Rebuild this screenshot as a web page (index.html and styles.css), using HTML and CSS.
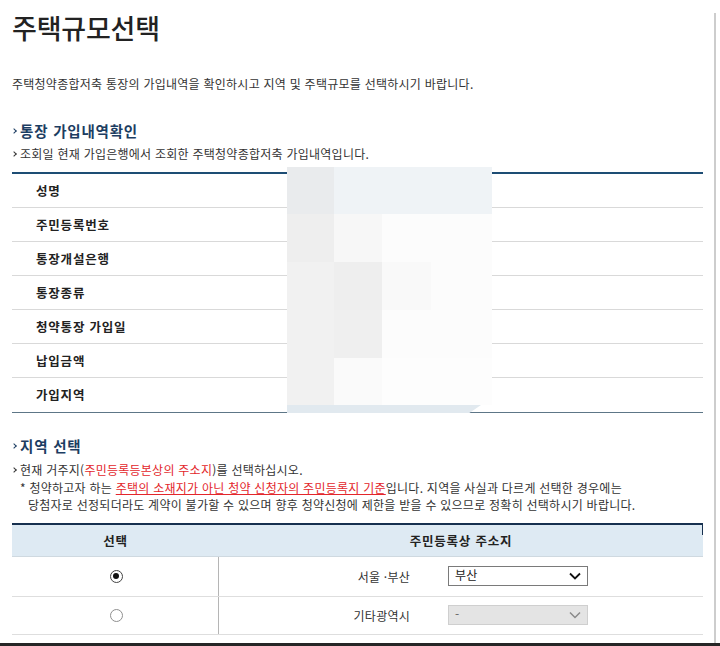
FILE: index.html
```html
<!DOCTYPE html>
<html lang="ko">
<head>
<meta charset="utf-8">
<title>주택규모선택</title>
<link rel="stylesheet" href="styles.css">
</head>
<body>
<div class="page">
  <h1 class="title">주택규모선택</h1>
  <p class="desc">주택청약종합저축 통장의 가입내역을 확인하시고 지역 및 주택규모를 선택하시기 바랍니다.</p>

  <h2 class="sec-head"><span class="mark"></span>통장 가입내역확인</h2>
  <p class="note"><span class="mark small"></span>조회일 현재 가입은행에서 조회한 주택청약종합저축 가입내역입니다.</p>

  <div class="info-wrap">
    <div class="info-table">
      <div class="info-row">성명</div>
      <div class="info-row">주민등록번호</div>
      <div class="info-row">통장개설은행</div>
      <div class="info-row">통장종류</div>
      <div class="info-row">청약통장 가입일</div>
      <div class="info-row">납입금액</div>
      <div class="info-row">가입지역</div>
    </div>
    <div class="blur">
      <div class="bc c-a"></div><div class="bc c-b"></div><div class="bc c-b"></div><div class="bc c-b"></div>
      <div class="bc c-d"></div><div class="bc c-f"></div><div class="bc c-g"></div><div class="bc c-g"></div>
      <div class="bc c-e"></div><div class="bc c-d"></div><div class="bc c-h"></div><div class="bc c-g"></div>
      <div class="bc c-e"></div><div class="bc c-d2"></div><div class="bc c-g"></div><div class="bc c-g"></div>
      <div class="bc c-e"></div><div class="bc c-i"></div><div class="bc c-j"></div><div class="bc c-j"></div>
    </div>
    <div class="blur-strip"></div>
  </div>

  <h2 class="sec-head sec2"><span class="mark"></span>지역 선택</h2>
  <p class="note note2"><span class="mark small"></span>현재 거주지(<span class="red">주민등록등본상의 주소지</span>)를 선택하십시오.</p>
  <p class="star">* 청약하고자 하는 <span class="red uline">주택의 소재지가 아닌 청약 신청자의 주민등록지 기준</span>입니다. 지역을 사실과 다르게 선택한 경우에는<br><span class="indent">당첨자로 선정되더라도 계약이 불가할 수 있으며 향후 청약신청에 제한을 받을 수 있으므로 정확히 선택하시기 바랍니다.</span></p>

  <div class="region-table">
    <div class="rt-head">
      <div class="rt-c1">선택</div>
      <div class="rt-c2">주민등록상 주소지</div>
    </div>
    <div class="rt-row r1">
      <div class="rt-c1"><span class="radio checked"></span></div>
      <div class="rt-c2">
        <div class="pick">
          <span class="pick-label">서울 ·부산</span>
          <div class="sel">
            <span class="sel-val">부산</span>
            <svg class="chev" width="12" height="8" viewBox="0 0 12 8"><path d="M1 1.5 L6 6.5 L11 1.5" fill="none" stroke="#111" stroke-width="1.8"/></svg>
          </div>
        </div>
      </div>
    </div>
    <div class="rt-row r2">
      <div class="rt-c1"><span class="radio"></span></div>
      <div class="rt-c2">
        <div class="pick">
          <span class="pick-label">기타광역시</span>
          <div class="sel disabled">
            <span class="sel-val">-</span>
            <svg class="chev" width="12" height="8" viewBox="0 0 12 8"><path d="M1 1.5 L6 6.5 L11 1.5" fill="none" stroke="#8a8a8a" stroke-width="1.5"/></svg>
          </div>
        </div>
      </div>
    </div>
  </div>
</div>
<div class="screen-bottom"></div>
</body>
</html>
```
FILE: styles.css
```css
* { box-sizing: border-box; }
html, body { margin: 0; padding: 0; background: #fff; }
body {
  font-family: "Noto Sans CJK KR", "Noto Sans", sans-serif;
  color: #333;
  overflow: hidden;
  letter-spacing: 0.25px;
}
.page {
  width: 716px;
  min-height: 646px;
  border-right: 2px solid #cdcdcd;
  padding: 0 11px 0 12px;
}
.title {
  margin: 13px 0 0;
  font-size: 27px;
  line-height: 30px;
  font-weight: 500;
  color: #222;
  letter-spacing: -0.2px;
}
.desc {
  margin: 33px 0 0;
  font-size: 12px;
  line-height: 16px;
  color: #333;
}
.sec-head {
  margin: 29px 0 0;
  font-size: 14.5px;
  line-height: 20px;
  font-weight: 700;
  color: #1c3d62;
  display: flex;
  align-items: center;
  letter-spacing: 0.8px;
}
.mark {
  display: inline-block;
  width: 4px;
  height: 4px;
  border-right: 1.5px solid #1c3d62;
  border-bottom: 1.5px solid #1c3d62;
  transform: rotate(-45deg);
  margin: 0 4px 0 0;
  flex: none;
}
.mark.small {
  border-color: #333;
}
.note {
  margin: 5px 0 0;
  font-size: 12px;
  line-height: 16px;
  color: #333;
  display: flex;
  align-items: center;
}
.info-wrap {
  position: relative;
  margin-top: 10px;
}
.info-table {
  border-top: 2px solid #1d4d74;
  border-bottom: 1.5px solid #5d7687;
}
.info-row {
  height: 34px;
  border-bottom: 1px solid #d9d9d9;
  padding-left: 24px;
  font-size: 12.5px;
  font-weight: 700;
  color: #222;
  letter-spacing: 0.8px;
  display: flex;
  align-items: center;
}
.info-row:last-child { border-bottom: none; height: 33.5px; }
.blur {
  position: absolute;
  left: 275px;
  top: -5px;
  width: 205px;
  height: 238px;
  display: grid;
  grid-template-columns: 47px 48px 49px 61px;
  grid-template-rows: 47px 48px 48px 48px 47px;
}
.c-a { background: #e9ebed; }
.c-b { background: #eff3f6; }
.c-d { background: #eeeeee; }
.c-d2 { background: #efefef; }
.c-e { background: #f1f1f1; }
.c-f { background: #f7f7f7; }
.c-g { background: #fcfcfc; }
.c-h { background: #f9f9f9; }
.c-i { background: #fafafa; }
.c-j { background: #fdfdfd; }
.blur-strip {
  position: absolute;
  left: 275px;
  top: 233px;
  width: 194px;
  height: 8px;
  background: #e1e9ef;
  clip-path: polygon(0 0, 100% 0, 94% 100%, 0 100%);
}
.sec2 { margin-top: 23px; }
.note2 { margin-top: 6px; }
.red { color: #e3262b; }
.uline { text-decoration: underline; text-underline-offset: 1px; }
.star {
  margin: 1px 0 0 8px;
  font-size: 12px;
  line-height: 17.5px;
  color: #333;
}
.indent { padding-left: 8px; }
.region-table {
  margin-top: 9px;
  border-top: 2px solid #17304f;
  position: relative;
}
.region-table::after {
  content: "";
  position: absolute;
  right: 0;
  top: -2px;
  width: 1px;
  height: 12px;
  background: #17304f;
}
.rt-head {
  display: flex;
  height: 32px;
  background: #deeaf3;
  font-size: 12.5px;
  font-weight: 700;
  color: #222;
  letter-spacing: 0.8px;
  border-bottom: 1px solid #cfd9e0;
}
.rt-head > div {
  display: flex;
  align-items: center;
  justify-content: center;
}
.rt-c1 { width: 207px; flex: none; }
.rt-c2 { flex: 1; }
.rt-row {
  display: flex;
  border-bottom: 1px solid #dedede;
}
.rt-row > div {
  display: flex;
  align-items: center;
  justify-content: center;
}
.rt-row .rt-c1 { border-right: 1px solid #b5b5b5; }
.r1 { height: 40px; }
.r2 { height: 38px; }
.radio {
  width: 13px;
  height: 13px;
  border-radius: 50%;
  border: 1px solid #8f8f8f;
  background: #fff;
  display: inline-block;
  position: relative;
  margin-left: 2px;
}
.radio.checked {
  border: 1.5px solid #444;
}
.radio.checked::after {
  content: "";
  position: absolute;
  left: 50%;
  top: 50%;
  width: 6px;
  height: 6px;
  margin: -3px 0 0 -3px;
  border-radius: 50%;
  background: #111;
}
.pick {
  display: flex;
  align-items: center;
  gap: 38px;
  margin-left: -2px;
}
.pick-label {
  width: 78px;
  text-align: right;
  font-size: 12px;
  color: #333;
}
.sel {
  width: 140px;
  height: 20px;
  border: 1px solid #7a7a7a;
  background: #fff;
  display: flex;
  align-items: center;
  justify-content: space-between;
  padding: 0 6px 0 6px;
  font-size: 12px;
  color: #222;
}
.sel-val { position: relative; top: -2px; }
.sel.disabled {
  background: #e4e4e4;
  border-color: #cfcfcf;
  color: #666;
}
.chev { display: block; }
.screen-bottom {
  position: fixed;
  left: 0;
  bottom: 0;
  width: 100%;
  height: 3px;
  background: #262626;
}
```
